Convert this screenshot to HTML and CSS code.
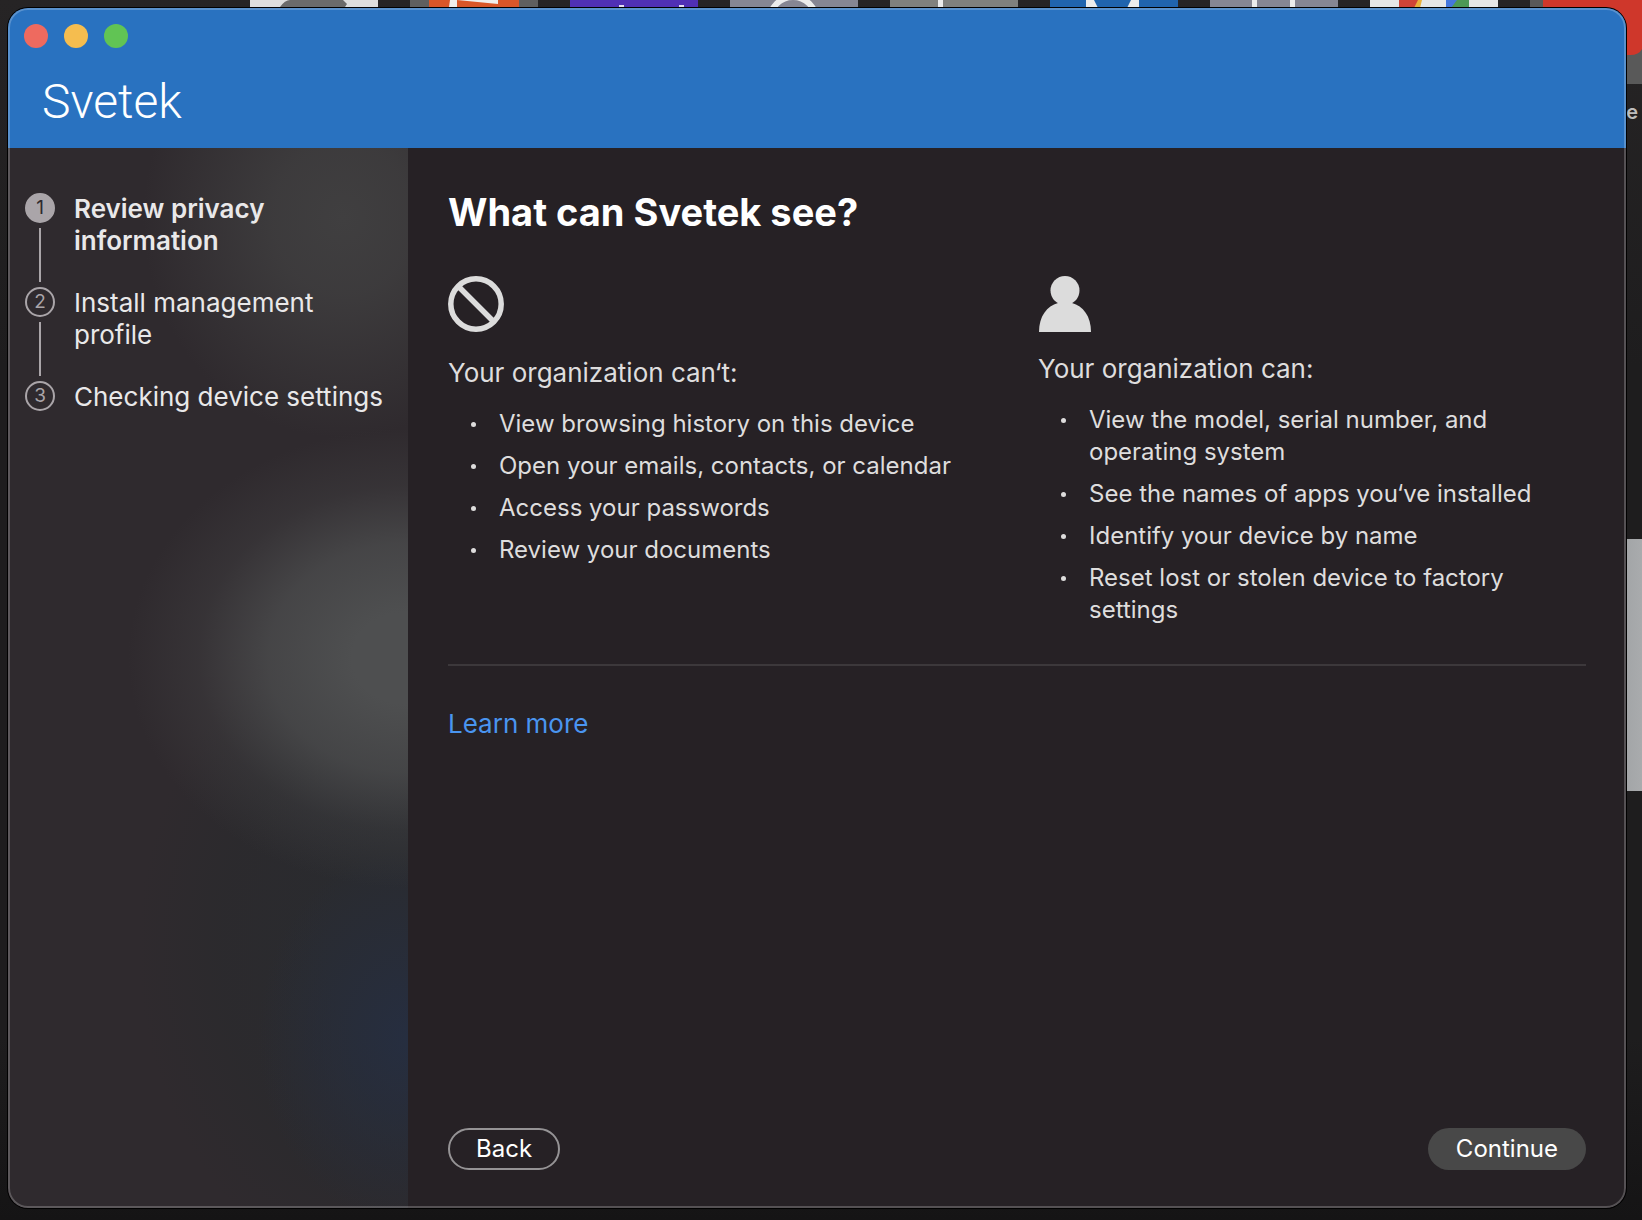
FILE: index.html
```html
<!DOCTYPE html>
<html lang="en">
<head>
<meta charset="utf-8">
<title>Svetek</title>
<meta name="viewport" content="width=device-width, initial-scale=1">
<link rel="stylesheet" href="styles.css">
</head>
<body>
<svg class="desktop-apps" width="1642" height="84" viewBox="0 0 1642 84" aria-hidden="true">
  <rect x="250" width="128" height="84" fill="#dedede"/>
  <path d="M280 7Q285 0 290 0H343L347 4L345 7Z" fill="#6b6b6b"/>
  <rect x="410" width="128" height="84" fill="#5f5f5f"/>
  <rect x="429" width="90" height="84" fill="#d95628"/>
  <path d="M450 0H498V4L457 0V7H449Z" fill="#f0eeec"/>
  <rect x="570" width="128" height="84" fill="#5030b5"/>
  <path d="M619 5h5v3h-5zM679 5h5v3h-5z" fill="#e6e0f5"/>
  <rect x="730" width="128" height="84" fill="#868693"/>
  <circle cx="793" cy="20" r="23" fill="none" stroke="#ececec" stroke-width="6"/>
  <rect x="890" width="128" height="84" fill="#80817e"/>
  <rect x="938" width="5" height="84" fill="#ececec"/>
  <rect x="1050" width="128" height="84" fill="#2064ae"/>
  <path d="M1086 0h8l4 8h-12zM1131 0h8v8h-12z" fill="#ececec"/>
  <rect x="1210" width="128" height="84" fill="#868693"/>
  <path d="M1252 0h5v8h-5zM1290 0h5v8h-5z" fill="#ececec"/>
  <rect x="1370" width="128" height="84" fill="#e6e6e6"/>
  <path d="M1399 0h22l-6 8h-16z" fill="#cf4437"/>
  <path d="M1418 0h4l-2 8h-6z" fill="#e9b13b"/>
  <path d="M1446 0h14l-8 8h-6z" fill="#4576dc"/>
  <path d="M1457 0h12v8h-18z" fill="#4d9855"/>
  <rect x="1530" width="112" height="84" fill="#595959"/>
  <path d="M1543 0H1642V49Q1639 55 1630 55H1543Z" fill="#cf372b"/>
</svg>
<span class="desktop-label" aria-hidden="true">e</span>
<div class="desktop-panel"></div>

<div class="window">
  <header class="titlebar">
    <div class="lights">
      <button class="light close" aria-label="Close"></button>
      <button class="light minimize" aria-label="Minimize"></button>
      <button class="light zoom" aria-label="Zoom"></button>
    </div>
    <div class="brand">Svetek</div>
  </header>
  <div class="body">
    <nav class="sidebar" aria-label="Enrollment steps">
      <ol class="steps">
        <li class="step current" aria-current="step"><span class="marker">1</span><span class="step-name">Review privacy information</span></li>
        <li class="step"><span class="marker">2</span><span class="step-name">Install management profile</span></li>
        <li class="step"><span class="marker">3</span><span class="step-name">Checking device settings</span></li>
      </ol>
    </nav>
    <main class="content">
      <h1>What can Svetek see?</h1>
      <div class="columns">
        <section class="column">
          <svg class="icon" viewBox="0 0 56 56" aria-hidden="true"><g fill="none" stroke="#dcdcdc" stroke-width="5.5"><circle cx="28" cy="28" r="25.2"/><path d="M10.5 10.5L45.5 45.5"/></g></svg>
          <h2 class="lower">Your organization can‘t:</h2>
          <ul>
            <li>View browsing history on this device</li>
            <li>Open your emails, contacts, or calendar</li>
            <li>Access your passwords</li>
            <li>Review your documents</li>
          </ul>
        </section>
        <section class="column">
          <svg class="icon" viewBox="0 0 56 56" aria-hidden="true"><g fill="#dcdcdc"><ellipse cx="27" cy="14.5" rx="14.5" ry="14.5"/><path d="M1 56C1 40 9 30 20 27H34C45 30 53 40 53 56Z"/></g></svg>
          <h2>Your organization can:</h2>
          <ul>
            <li>View the model, serial number, and operating system</li>
            <li>See the names of apps you‘ve installed</li>
            <li>Identify your device by name</li>
            <li>Reset lost or stolen device to factory settings</li>
          </ul>
        </section>
      </div>
      <hr>
      <a class="learn" href="#">Learn more</a>
      <footer class="actions">
        <button class="button back">Back</button>
        <button class="button continue">Continue</button>
      </footer>
    </main>
  </div>
</div>
</body>
</html>
```

FILE: styles.css
```css
* {
  box-sizing: border-box;
}

body {
  margin: 0;
  min-height: 100vh;
  padding: 8px 16px 12px 8px;
  display: flex;
  overflow-x: hidden;
  background: linear-gradient(#262425, #1e1d1e 30%, #1e1d1e 85%, #151415);
  color: #dedddd;
  font-family: Inter, "Liberation Sans", sans-serif;
  font-size: 24px;
  line-height: 32px;
}

h1, h2, ul, ol {
  margin: 0;
  padding: 0;
}

button {
  font: inherit;
  padding: 0;
}

.desktop-apps {
  position: absolute;
  top: 0;
  left: 0;
}

.desktop-label {
  position: absolute;
  top: 96px;
  right: 4px;
  font-size: 20px;
  font-weight: 600;
  color: #bcbcbc;
}

.desktop-panel {
  position: absolute;
  top: 539px;
  right: 0;
  width: 24px;
  height: 252px;
  background: linear-gradient(90deg, #9fa2a4, #a9abad);
}

.window {
  position: relative;
  flex: 1;
  display: flex;
  flex-direction: column;
  border-radius: 20px;
  overflow: hidden;
  background: #262125;
  box-shadow: 0 0 0 1px #000;
}

.window::after {
  content: "";
  position: absolute;
  inset: 0;
  border: 2px solid rgba(255, 255, 255, 0.22);
  border-radius: 20px;
  pointer-events: none;
}

.titlebar {
  padding: 16px 36px 16px 16px;
  background: #2972c0;
}

.lights {
  display: flex;
  gap: 16px;
}

.light {
  width: 24px;
  height: 24px;
  border: 0;
  border-radius: 50%;
}

.close { background: #ee6a5f; }
.minimize { background: #f5bd4f; }
.zoom { background: #61c454; }

.brand {
  margin-top: 24px;
  padding-left: 18px;
  color: #fff;
  font-family: Roboto, Inter, sans-serif;
  font-size: 48px;
  font-weight: 300;
  line-height: 60px;
}

.body {
  flex: 1;
  display: flex;
}

.sidebar {
  flex: 0 0 400px;
  padding: 45px 17px;
  background:
    radial-gradient(200px 220px at 335px 70px, #403f40, rgba(64, 63, 64, 0.8) 35%, rgba(64, 63, 64, 0)),
    radial-gradient(280px 230px at 100% 510px, #4e4f50 20%, rgba(77, 78, 79, 0.75) 50%, rgba(77, 78, 79, 0.25) 75%, rgba(77, 78, 79, 0)),
    radial-gradient(150px 190px at 100% 890px, #262e40, rgba(38, 46, 64, 0)),
    radial-gradient(270px 340px at 100% 800px, #2a2b2f 30%, rgba(42, 42, 45, 0.7) 70%, rgba(42, 42, 45, 0)),
    #2f2a2e;
}

.steps {
  display: flex;
  flex-direction: column;
  gap: 30px;
  list-style: none;
}

.step {
  position: relative;
  display: flex;
  gap: 19px;
  color: #e9e8e9;
  font-size: 26px;
}

.marker {
  flex: none;
  width: 30px;
  height: 30px;
  border: 2px solid #aaa5a9;
  border-radius: 50%;
  color: #aaa5a9;
  font-size: 19px;
  line-height: 26px;
  text-align: center;
}

.step:not(:last-child)::before {
  content: "";
  position: absolute;
  top: 35px;
  left: 14px;
  width: 2px;
  height: 54px;
  background: #aaa5a9;
}

.current .marker {
  background: #aaa5a9;
  color: #2f2a2e;
}

.current .step-name {
  font-weight: 600;
}

.content {
  flex: 1;
  display: flex;
  flex-direction: column;
  padding: 40px 40px 38px;
}

h1 {
  color: #fff;
  font-size: 38px;
  font-weight: 700;
  line-height: 48px;
}

.columns {
  display: grid;
  grid-template-columns: 1fr 1fr;
  gap: 42px;
  margin-top: 40px;
}

.icon {
  display: block;
  width: 56px;
  height: 56px;
}

h2 {
  margin-top: 21px;
  font-size: 26px;
  font-weight: 400;
}

h2.lower {
  margin-top: 25px;
}

ul {
  display: flex;
  flex-direction: column;
  gap: 10px;
  margin-top: 19px;
  padding-left: 51px;
  list-style: none;
}

ul li {
  position: relative;
}

ul li::before {
  content: "";
  position: absolute;
  top: 14px;
  left: -28px;
  width: 5px;
  height: 5px;
  border-radius: 50%;
  background: #dedddd;
}

hr {
  width: 100%;
  height: 2px;
  margin: 38px 0 0;
  border: 0;
  background: #3c383b;
}

.learn {
  align-self: flex-start;
  margin-top: 42px;
  color: #4a95f0;
  font-size: 26px;
  text-decoration: none;
}

.actions {
  display: flex;
  justify-content: space-between;
  margin-top: auto;
}

.button {
  height: 42px;
  padding: 0 28px;
  border: 0;
  border-radius: 21px;
  color: #fff;
}

.back {
  padding: 0 26px;
  border: 2px solid #959395;
  background: transparent;
}

.continue {
  background: #484848;
}
```
